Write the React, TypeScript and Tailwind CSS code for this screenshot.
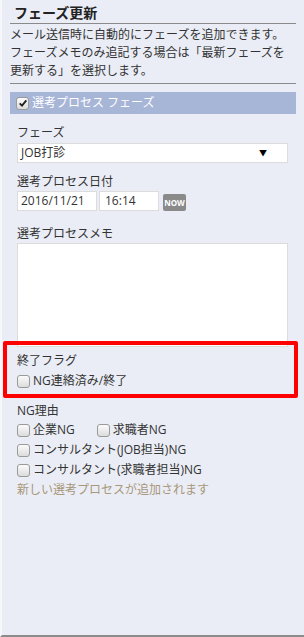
const FONT = "font-['Meiryo','Open_Sans','Noto_Sans_CJK_JP',sans-serif]"

function Box({ checked = false }: { checked?: boolean }) {
  return (
    <span className="inline-flex h-[13px] w-[13px] shrink-0 items-center justify-center rounded-[3px] border border-[#9a9a9a] bg-gradient-to-b from-[#fbfbfb] to-[#dcdcdc]">
      {checked && (
        <svg viewBox="0 0 12 12" className="h-[10px] w-[10px]">
          <path d="M2 6.5 L4.8 9.2 L10 2.8" fill="none" stroke="#222" strokeWidth="2.2" />
        </svg>
      )}
    </span>
  )
}

function Check({ label }: { label: string }) {
  return (
    <label className="flex h-[20px] items-center gap-[3px] text-[12px] text-[#333]">
      <Box />
      <span>{label}</span>
    </label>
  )
}

export default function App() {
  return (
    <div className={`relative h-[637px] w-[304px] overflow-hidden border-b-2 border-l-2 border-b-[#8c8c8c] border-l-[#f6f7fb] bg-[#eaedf5] ${FONT}`}>
      <div className="pl-2 pr-2">
        <h2 className="flex h-[23px] items-center pl-1 pt-[1px] text-[14px] font-bold text-[#222]">フェーズ更新</h2>
        <div className="h-[1px] bg-[#8a8a8a]" />
        <p className="pt-[2px] pb-[3px] text-[12px] leading-[18px] text-[#333]">
          メール送信時に自動的にフェーズを追加できます。
          <br />
          フェーズメモのみ追記する場合は「最新フェーズを
          <br />
          更新する」を選択します。
        </p>
        <div className="h-[1px] bg-[#8a8a8a]" />
        <div className="mt-2 flex h-[22px] items-center gap-[3px] bg-[#a7b5d7] pl-[6px] text-[12px] text-white">
          <Box checked />
          <span>選考プロセス フェーズ</span>
        </div>

        <div className="pl-[7px] pr-2 text-[12px] text-[#333]">
          <div className="mt-[10px] leading-[18px]">フェーズ</div>
          <div className="mt-[1px] flex h-[20px] items-center justify-between border border-[#dcdcdc] bg-white pl-[3px] pr-[20px]">
            <span>JOB打診</span>
            <span className="text-[8px] text-black">▼</span>
          </div>

          <div className="mt-[10px] leading-[18px]">選考プロセス日付</div>
          <div className="flex items-start gap-[2px]">
            <div className="flex h-[20px] w-[80px] items-center border border-[#dcdcdc] bg-white pl-[3px]">2016/11/21</div>
            <div className="flex h-[20px] w-[60px] items-center border border-[#dcdcdc] bg-white pl-[5px]">16:14</div>
            <div className="ml-[2px] mt-[3px] flex h-[17px] w-[23px] items-center justify-center rounded-[2px] bg-[#8a8a8a] text-[8px] font-bold text-white">
              NOW
            </div>
          </div>

          <div className="mt-[14px] leading-[18px]">選考プロセスメモ</div>
          <div className="h-[104px] border border-[#dcdcdc] bg-white" />

          <div className="mt-[4px] leading-[20px]">終了フラグ</div>
          <Check label="NG連絡済み/終了" />

          <div className="mt-[11px] leading-[18px]">NG理由</div>
          <div className="flex gap-[22px]">
            <Check label="企業NG" />
            <Check label="求職者NG" />
          </div>
          <Check label="コンサルタント(JOB担当)NG" />
          <Check label="コンサルタント(求職者担当)NG" />
          <div className="leading-[20px] text-[#a8977a]">新しい選考プロセスが追加されます</div>
        </div>
      </div>

      <div className="absolute left-[1px] top-[341px] h-[57px] w-[295px] rounded-[2px] border-4 border-[#ff0000]" />
    </div>
  )
}
